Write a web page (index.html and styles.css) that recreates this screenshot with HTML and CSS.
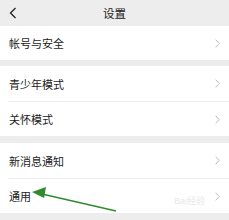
FILE: index.html
```html
<!DOCTYPE html>
<html lang="zh">
<head>
<meta charset="utf-8">
<link rel="stylesheet" href="styles.css">
</head>
<body>
<div class="page">
  <div class="header">
    <svg class="back" width="8" height="12" viewBox="0 0 8 12"><path d="M6.5 1 L1.5 6 L6.5 11" fill="none" stroke="#222" stroke-width="1.3"/></svg>
    <div class="title">设置</div>
  </div>
  <div class="group g1">
    <div class="row"><span class="label">帐号与安全</span><svg class="chev" width="5" height="9" viewBox="0 0 5 9"><path d="M0.7 0.7 L4.2 4.5 L0.7 8.3" fill="none" stroke="#bdbdbd" stroke-width="1"/></svg></div>
  </div>
  <div class="group g2">
    <div class="row"><span class="label">青少年模式</span><svg class="chev" width="5" height="9" viewBox="0 0 5 9"><path d="M0.7 0.7 L4.2 4.5 L0.7 8.3" fill="none" stroke="#bdbdbd" stroke-width="1"/></svg></div>
    <div class="row"><span class="label">关怀模式</span><svg class="chev" width="5" height="9" viewBox="0 0 5 9"><path d="M0.7 0.7 L4.2 4.5 L0.7 8.3" fill="none" stroke="#bdbdbd" stroke-width="1"/></svg></div>
  </div>
  <div class="group g3">
    <div class="row"><span class="label">新消息通知</span><svg class="chev" width="5" height="9" viewBox="0 0 5 9"><path d="M0.7 0.7 L4.2 4.5 L0.7 8.3" fill="none" stroke="#bdbdbd" stroke-width="1"/></svg></div>
    <div class="row"><span class="label">通用</span><svg class="chev" width="5" height="9" viewBox="0 0 5 9"><path d="M0.7 0.7 L4.2 4.5 L0.7 8.3" fill="none" stroke="#bdbdbd" stroke-width="1"/></svg></div>
  </div>
  <div class="watermark">Bai经验</div>
  <svg class="arrow" width="229" height="220" viewBox="0 0 229 220">
    <path d="M42 194 L116 211" stroke="#2f8a2f" stroke-width="1.6" fill="none"/>
    <path d="M32 192 L46 187 L44 198 Z" fill="#2f8a2f"/>
  </svg>
</div>
</body>
</html>
```
FILE: styles.css
```css
html, body { margin: 0; padding: 0; }
body {
  width: 229px; height: 220px; overflow: hidden;
  background: #ededed;
  font-family: "Noto Sans CJK SC", "Noto Sans", sans-serif;
  color: #1c1c1c;
}
.page { position: relative; width: 229px; height: 220px; }
.header {
  height: 26px; display: flex; align-items: center; justify-content: center;
  position: relative; background: #ededed;
}
.back { position: absolute; left: 9px; top: 7px; }
.title { font-size: 11.5px; line-height: 26px; color: #1a1a1a; }
.group { background: #fff; }
.g2 { margin-top: 6px; }
.g3 { margin-top: 7px; }
.row {
  height: 34px; display: flex; align-items: center; justify-content: space-between;
  margin-left: 9px; padding-right: 9px;
}
.g2 .row, .g3 .row { height: 35px; }
.row + .row { border-top: 1px solid #ececec; height: 34px; }
.label { font-size: 11px; color: #1c1c1c; }
.watermark {
  position: absolute; left: 174px; top: 194px;
  font-size: 9px; color: #e8e8e8; font-family: "Liberation Sans", "Noto Sans CJK SC", sans-serif;
}
.arrow { position: absolute; left: 0; top: 0; }
```
